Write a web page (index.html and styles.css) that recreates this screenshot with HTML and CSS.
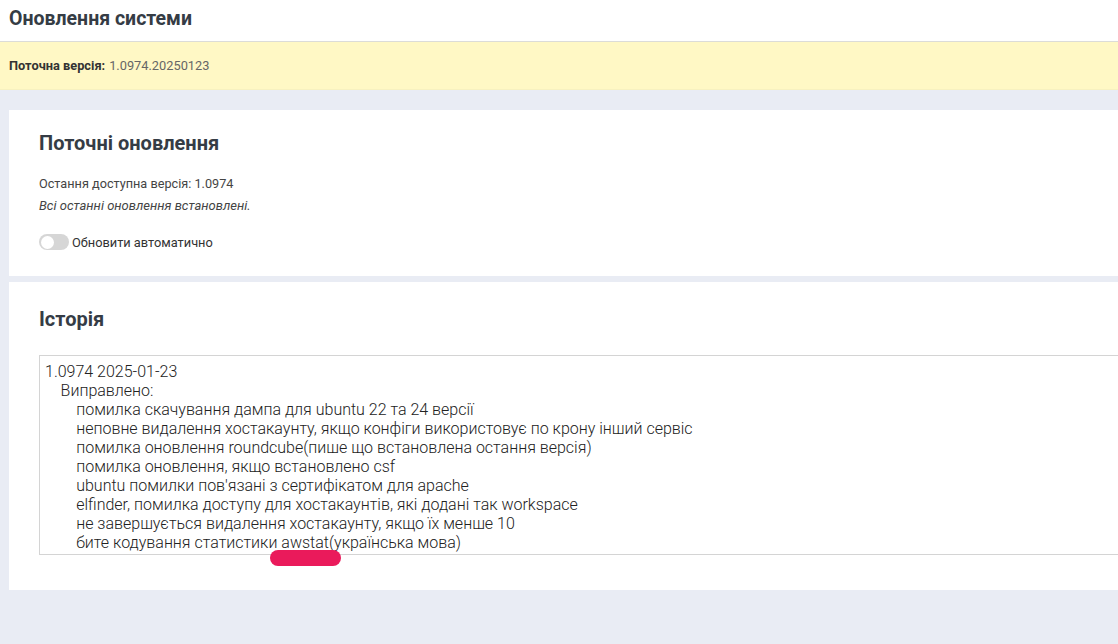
FILE: index.html
```html
<!DOCTYPE html>
<html lang="uk">
<head>
    <meta charset="UTF-8">
    <meta name="viewport" content="width=device-width, initial-scale=1.0">
    <title>Оновлення системи</title>
    <link rel="stylesheet" href="styles.css">
</head>
<body>
    <div class="page-header">
        <h1>Оновлення системи</h1>
    </div>

    <div class="version-bar">
        <b>Поточна версія:</b> 1.0974.20250123
    </div>

    <div class="content">
        <div class="card card-current">
            <h2>Поточні оновлення</h2>
            <p class="latest">Остання доступна версія: 1.0974</p>
            <p class="note">Всі останні оновлення встановлені.</p>
            <label class="switch-row">
                <span class="switch"><span class="knob"></span></span>
                Обновити автоматично
            </label>
        </div>

        <div class="card card-history">
            <h2>Історія</h2>
            <div class="history-wrap">
                <textarea class="history" readonly>1.0974 2025-01-23
    Виправлено:
        помилка скачування дампа для ubuntu 22 та 24 версії
        неповне видалення хостакаунту, якщо конфіги використовує по крону інший сервіс
        помилка оновлення roundcube(пише що встановлена остання версія)
        помилка оновлення, якщо встановлено csf
        ubuntu помилки пов'язані з сертифікатом для apache
        elfinder, помилка доступу для хостакаунтів, які додані так workspace
        не завершується видалення хостакаунту, якщо їх менше 10
        бите кодування статистики awstat(українська мова)</textarea>
                <span class="mark"></span>
            </div>
        </div>
    </div>
</body>
</html>
```

FILE: styles.css
```css
html, body {
    margin: 0;
    padding: 0;
    overflow: hidden;
}
body {
    font-family: Roboto, "Liberation Sans", Arial, sans-serif;
    background-color: #e9ecf4;
    color: #333;
    height: 644px;
}
.page-header {
    background-color: #fff;
    height: 41px;
    border-bottom: 1px solid #dcdcd8;
    padding-left: 9px;
    display: flex;
    align-items: center;
}
.page-header h1 {
    margin: 0;
    font-size: 19.5px;
    font-weight: bold;
    color: #353c45;
    padding-bottom: 4px;
}
.version-bar {
    background-color: #fff8c5;
    height: 47px;
    padding-left: 9px;
    display: flex;
    align-items: center;
    font-size: 12.8px;
    color: #666;
    box-shadow: 0 1px 0 #f7f1c0;
}
.version-bar b {
    color: #333;
    margin-right: 4px;
}
.content {
    padding: 21px 0 0 9px;
    margin-right: -40px;
}
.card {
    background-color: #fff;
    padding: 0 30px;
}
.card h2 {
    margin: 0;
    font-size: 20px;
    font-weight: bold;
    color: #353c45;
}
.card-current {
    height: 166px;
    padding-top: 21px;
    box-sizing: border-box;
    margin-bottom: 6px;
}
.latest {
    margin: 21px 0 0;
    font-size: 12.7px;
    color: #444;
}
.note {
    margin: 7px 0 0;
    font-size: 13px;
    font-style: italic;
    color: #444;
}
.switch-row {
    display: flex;
    align-items: center;
    margin-top: 21px;
    font-size: 12.8px;
    color: #333;
}
.switch {
    width: 30px;
    height: 16px;
    border-radius: 8px;
    background-color: #d6d6d6;
    margin-right: 3px;
    display: flex;
    align-items: center;
    padding: 0 2px;
    box-sizing: border-box;
}
.knob {
    width: 13px;
    height: 13px;
    border-radius: 50%;
    background-color: #fff;
}
.card-history {
    height: 308px;
    padding-top: 25px;
    box-sizing: border-box;
}
.history-wrap {
    position: relative;
    margin-top: 24px;
}
.history {
    display: block;
    width: 100%;
    box-sizing: border-box;
    height: 200px;
    border: 1px solid #d4d4d4;
    border-radius: 0;
    padding: 6px 5px;
    font-family: Roboto, "Liberation Sans", Arial, sans-serif;
    font-size: 16px;
    font-weight: 300;
    line-height: 19px;
    color: #222;
    resize: none;
    white-space: pre;
    overflow: hidden;
    outline: none;
}
.mark {
    position: absolute;
    left: 231px;
    top: 195px;
    width: 71px;
    height: 16px;
    border-radius: 8px;
    background-color: #ea1a5b;
}
```
